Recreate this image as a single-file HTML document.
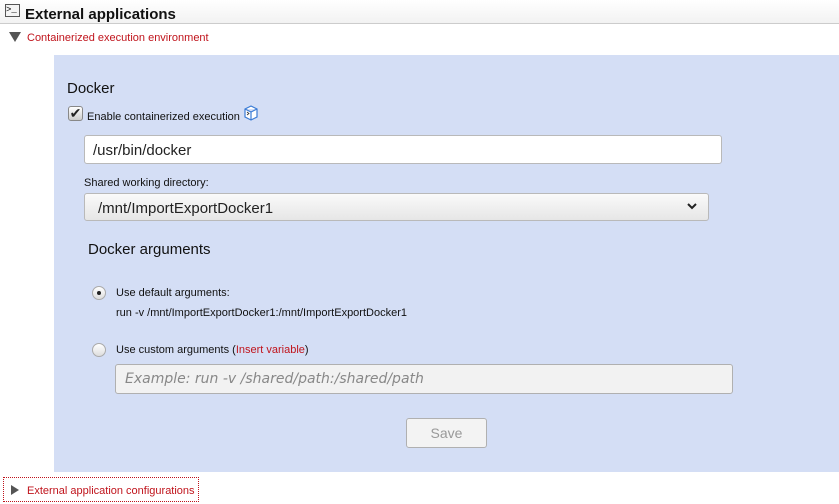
<!DOCTYPE html>
<html><head><style>
body{margin:0;width:839px;height:504px;background:#fff;font-family:"Liberation Sans",sans-serif;position:relative;overflow:hidden}
.a{position:absolute}
.hdr{left:0;top:0;width:839px;height:23px;border-bottom:1px solid #ccc;background:linear-gradient(#fff,#f2f2f2)}
.panel{left:54px;top:55px;width:785px;height:417px;background:#d4def5}
.inp{background:#fff;border:1px solid #b9b9b9;border-radius:3px;box-sizing:border-box}
.radio{width:14px;height:14px;border-radius:50%;border:1px solid #aaa;background:linear-gradient(#fff,#ddd);box-sizing:border-box}
</style></head><body>
<div class="a hdr"></div>
<div class="a" style="left:5px;top:4px;width:15px;height:13px;border:1px solid #555;box-sizing:border-box;background:#f4f4f4;font-size:9px;line-height:10px;font-family:'Liberation Mono',monospace">&gt;_</div>
<div class="a" style="left:25px;top:6px;font-size:15px;font-weight:bold;color:#111">External applications</div>
<div class="a" style="left:9px;top:32px;width:0;height:0;border-left:6px solid transparent;border-right:6px solid transparent;border-top:10px solid #555"></div>
<div class="a" style="left:27px;top:32px;font-size:11px;color:#c0141c">Containerized execution environment</div>
<div class="a panel"></div>
<div class="a" style="left:67px;top:80px;font-size:15px;color:#111">Docker</div>
<div class="a" style="left:68px;top:106px;width:15px;height:15px;border:1px solid #888;border-radius:3px;background:linear-gradient(#fff,#ccc);box-sizing:border-box;font-size:14px;line-height:13px;text-align:center;color:#222">✔</div>
<div class="a" style="left:87px;top:111px;font-size:11px;color:#111">Enable containerized execution</div>
<svg class="a" style="left:243px;top:105px" width="16" height="16" viewBox="0 0 16 16"><path d="M2 4L8 1L14 4L14 12L8 15L2 12Z M2 4L8 7L14 4 M8 7L8 15" fill="#fff" stroke="#3a7bd5" stroke-width="1.2"/><path d="M4 7L6 8.5L4 10" fill="none" stroke="#333" stroke-width="0.8"/></svg>
<div class="a inp" style="left:84px;top:135px;width:638px;height:29px;font-size:15px;padding:6px 0 0 8px;color:#222">/usr/bin/docker</div>
<div class="a" style="left:84px;top:177px;font-size:11px;color:#111">Shared working directory:</div>
<div class="a" style="left:84px;top:193px;width:625px;height:28px;border:1px solid #b9b9b9;border-radius:3px;box-sizing:border-box;background:linear-gradient(#fafafa,#e6e6e6);font-size:15px;padding:6px 0 0 13px;color:#222">/mnt/ImportExportDocker1</div>
<svg class="a" style="left:686px;top:201px" width="12" height="10"><path d="M2 3L6 7L10 3" fill="none" stroke="#222" stroke-width="2"/></svg>
<div class="a" style="left:88px;top:241px;font-size:15px;color:#111">Docker arguments</div>
<div class="a radio" style="left:92px;top:286px"></div><div class="a" style="left:97px;top:291px;width:4px;height:4px;border-radius:50%;background:#222"></div>
<div class="a" style="left:116px;top:287px;font-size:11px;color:#111">Use default arguments:</div>
<div class="a" style="left:116px;top:307px;font-size:11px;color:#111">run -v /mnt/ImportExportDocker1:/mnt/ImportExportDocker1</div>
<div class="a radio" style="left:92px;top:343px"></div>
<div class="a" style="left:116px;top:344px;font-size:11px;color:#111">Use custom arguments (<span style="color:#c0141c">Insert variable</span>)</div>
<div class="a" style="left:115px;top:364px;width:618px;height:30px;border:1px solid #b0b0b0;border-radius:3px;box-sizing:border-box;background:#f2f2f2;font-style:italic;color:#888;padding:6px 0 0 9px;font-family:'DejaVu Sans',sans-serif;font-size:14px">Example: run -v /shared/path:/shared/path</div>
<div class="a" style="left:406px;top:418px;width:81px;height:30px;border:1px solid #b0b0b0;border-radius:3px;box-sizing:border-box;background:#f3f3f3;font-size:14px;color:#999;text-align:center;line-height:28px">Save</div>
<div class="a" style="left:3px;top:477px;width:196px;height:25px;border:1px dotted #c0141c;box-sizing:border-box"></div>
<div class="a" style="left:11px;top:485px;width:0;height:0;border-top:5px solid transparent;border-bottom:5px solid transparent;border-left:8px solid #555"></div>
<div class="a" style="left:27px;top:485px;font-size:11px;color:#c0141c">External application configurations</div>
</body></html>
